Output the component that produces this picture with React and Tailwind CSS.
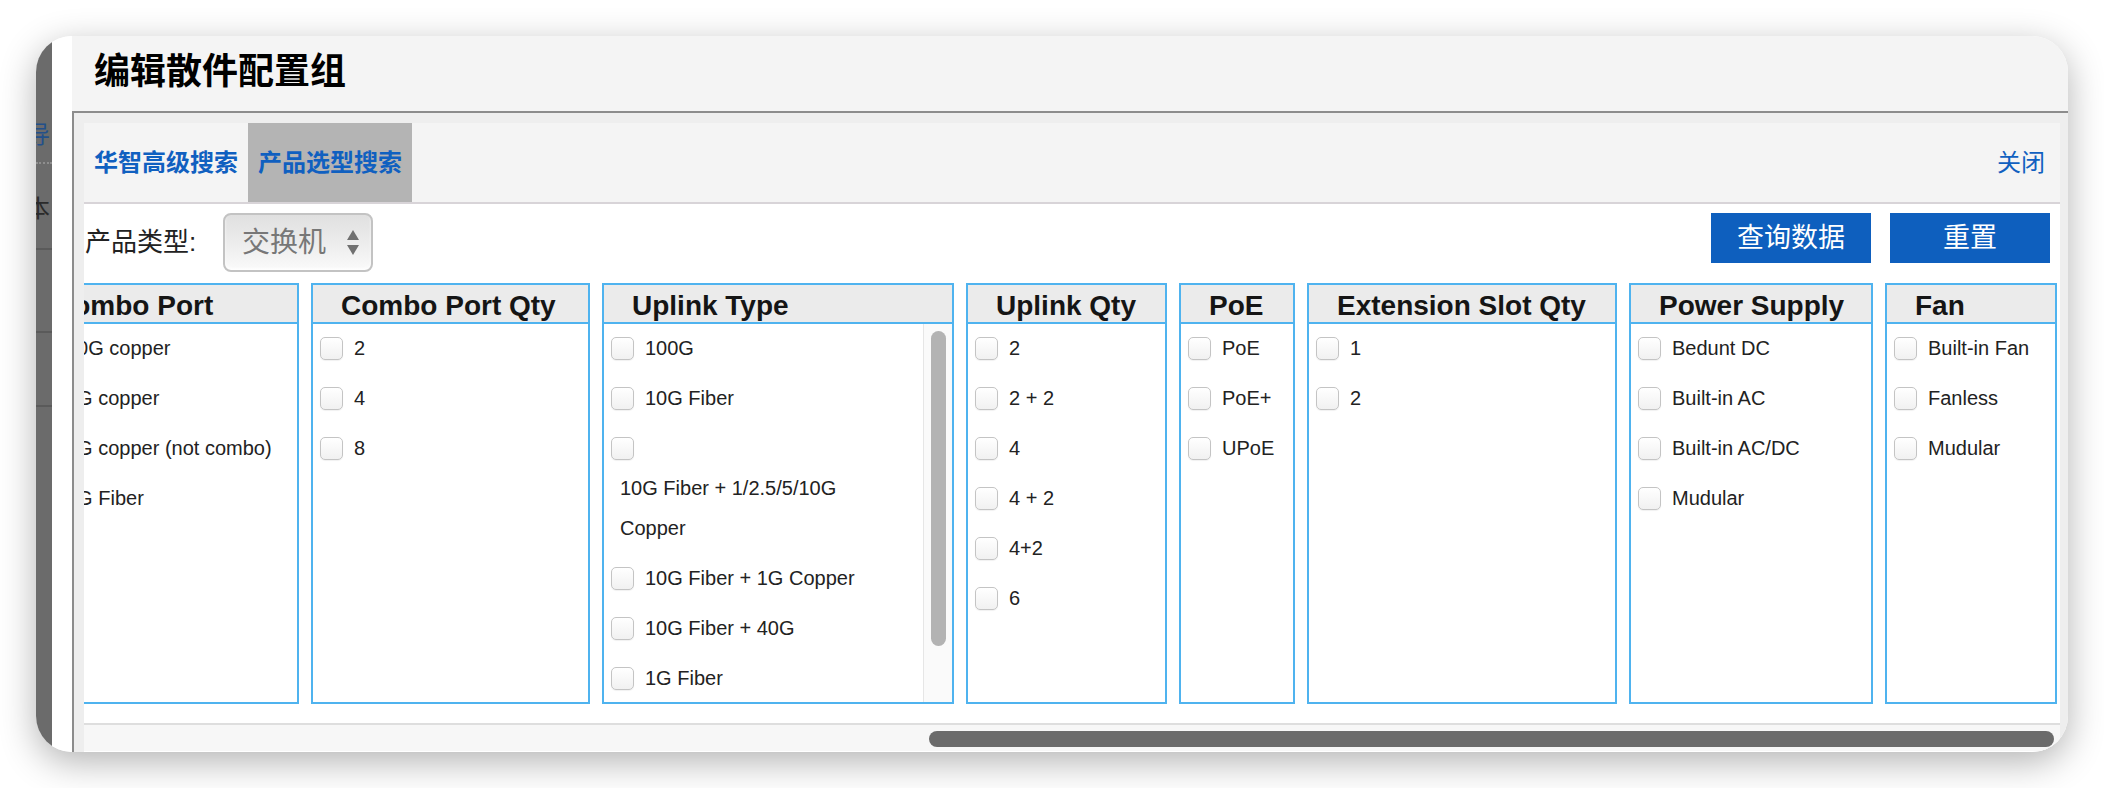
import React from 'react';

const FONT = "font-['Liberation_Sans','Noto_Sans_CJK_SC',sans-serif]";

const columns = [
  { title: 'Combo Port', width: 'w-[276px]', items: ['10G copper', '1G copper', '1G copper (not combo)', '1G Fiber'] },
  { title: 'Combo Port Qty', width: 'w-[279px]', items: ['2', '4', '8'] },
  {
    title: 'Uplink Type',
    width: 'w-[352px]',
    scroll: true,
    items: [
      '100G',
      '10G Fiber',
      { lines: ['10G Fiber + 1/2.5/5/10G', 'Copper'] },
      '10G Fiber + 1G Copper',
      '10G Fiber + 40G',
      '1G Fiber',
      '40G',
    ],
  },
  { title: 'Uplink Qty', width: 'w-[201px]', items: ['2', '2 + 2', '4', '4 + 2', '4+2', '6'] },
  { title: 'PoE', width: 'w-[116px]', items: ['PoE', 'PoE+', 'UPoE'] },
  { title: 'Extension Slot Qty', width: 'w-[310px]', items: ['1', '2'] },
  { title: 'Power Supply', width: 'w-[244px]', items: ['Bedunt DC', 'Built-in AC', 'Built-in AC/DC', 'Mudular'] },
  { title: 'Fan', width: 'w-[172px]', items: ['Built-in Fan', 'Fanless', 'Mudular'] },
];

const Checkbox = () => (
  <span className="block w-[23px] h-[23px] shrink-0 rounded-[5px] border border-[#c4c4c4] bg-linear-to-b from-white to-[#f1f1f1] shadow-[0_1px_1px_rgba(0,0,0,0.06)]"></span>
);

const Item = ({ item }) => {
  if (typeof item === 'object') {
    return (
      <div className="mb-2.5">
        <div className="flex items-center h-10 pl-[7px]">
          <Checkbox />
        </div>
        <div className="pl-[16px] leading-10">
          {item.lines[0]}
          <br />
          {item.lines[1]}
        </div>
      </div>
    );
  }
  return (
    <div className="flex items-center h-10 mb-2.5 pl-[7px] whitespace-nowrap">
      <Checkbox />
      <span className="ml-[11px]">{item}</span>
    </div>
  );
};

const Column = ({ col }) => (
  <div className={`${col.width} h-[421px] shrink-0 flex flex-col border-2 border-[#4fb3ef] bg-white`}>
    <div className="h-[39px] shrink-0 flex items-center pl-[28px] pt-[5px] bg-[#ebebeb] border-b-2 border-[#4fb3ef] text-[28px] font-bold text-[#151515] whitespace-nowrap">
      {col.title}
    </div>
    <div className="flex-1 flex min-h-0">
      <div className="flex-1 overflow-hidden pt-[4px] text-[20px] text-[#222]">
        {col.items.map((item, i) => (
          <Item key={i} item={item} />
        ))}
      </div>
      {col.scroll && (
        <div className="w-[29px] shrink-0 border-l border-[#e6e6e6] bg-[#fafafa] pt-[7px] flex justify-center">
          <div className="w-[15px] h-[315px] rounded-full bg-[#b3b3b3]"></div>
        </div>
      )}
    </div>
  </div>
);

const SideStrip = () => (
  <div className="w-4 shrink-0 bg-[#6b6b6b] overflow-hidden">
    <div className="h-[86px]"></div>
    <div className="h-[26px] leading-[26px] text-[24px] text-[#23508a] -ml-[10px] whitespace-nowrap">导</div>
    <div className="mt-[14px] border-t-2 border-dotted border-[#8e8e8e]"></div>
    <div className="mt-[32px] h-[26px] leading-[26px] text-[24px] text-[#2a2a2a] -ml-[10px] whitespace-nowrap">本</div>
    <div className="mt-[26px] h-[2px] bg-[#5a5a5a]"></div>
    <div className="mt-[81px] h-[2px] bg-[#5a5a5a]"></div>
    <div className="mt-[72px] h-[2px] bg-[#5a5a5a]"></div>
  </div>
);

export default function App() {
  return (
    <div className={`${FONT} w-[2104px] h-[788px] bg-white overflow-hidden pt-[36px] pl-[36px]`}>
      <div className="w-[2032px] h-[716px] rounded-[36px] overflow-hidden flex bg-white shadow-[0_10px_36px_rgba(0,0,0,0.3)]">
        <SideStrip />
        <div className="w-5 shrink-0 bg-white"></div>

        {/* dialog */}
        <div className="flex-1 flex flex-col min-w-0">
          <div className="h-[75px] shrink-0 bg-[#f4f4f4] flex items-center pl-[22px]">
            <h1 className="text-[36px] font-bold text-black -mt-[4px]">编辑散件配置组</h1>
          </div>

          <div className="flex-1 border-t-2 border-l-2 border-[#8c8c8c] bg-[#eeeeee] pt-[10px] pl-[10px] pr-[8px] min-h-0">
            <div className="bg-white h-full flex flex-col">
              {/* tabs */}
              <div className="h-[81px] shrink-0 flex bg-[#f4f4f4] border-b-2 border-[#d8d4d8]">
                <div className="w-[164px] flex items-center justify-center text-[24px] font-bold text-[#1060c0]">
                  华智高级搜索
                </div>
                <div className="w-[164px] flex items-center justify-center bg-[#b4b4b4] text-[24px] font-bold text-[#1060c0]">
                  产品选型搜索
                </div>
                <div className="ml-auto pr-[15px] flex items-center text-[24px] text-[#1060c0]">关闭</div>
              </div>

              {/* toolbar */}
              <div className="flex items-start pt-[9px] pl-px pr-[10px]">
                <div className="flex items-center">
                  <span className="w-[138px] text-[26px] text-[#222]">产品类型:</span>
                  <div className="w-[150px] h-[59px] rounded-[8px] border-2 border-[#c3c3c3] bg-linear-to-b from-[#e0e0e0] via-[#ececec] to-[#fafafa] flex items-center pl-[17px] pr-[12px] shadow-[inset_0_-2px_3px_rgba(255,255,255,0.8)]">
                    <span className="text-[28px] text-[#777]">交换机</span>
                    <svg className="ml-auto" width="12" height="26" viewBox="0 0 12 26">
                      <path d="M6 0 L12 10 L0 10 Z" fill="#707070" />
                      <path d="M0 15 L12 15 L6 25 Z" fill="#707070" />
                    </svg>
                  </div>
                </div>
                <div className="ml-auto flex gap-[19px]">
                  <button className="w-[160px] h-[50px] bg-[#0e5fbe] text-white text-[27px] flex items-center justify-center">
                    查询数据
                  </button>
                  <button className="w-[160px] h-[50px] bg-[#0e5fbe] text-white text-[27px] flex items-center justify-center">
                    重置
                  </button>
                </div>
              </div>

              {/* columns */}
              <div className="mt-[11px] overflow-hidden shrink-0">
                <div className="flex gap-3 -ml-[61px]">
                  {columns.map((col) => (
                    <Column key={col.title} col={col} />
                  ))}
                </div>
              </div>

              {/* horizontal scrollbar */}
              <div className="mt-[19px] border-t-2 border-[#dedede] bg-[#f7f7f7] h-[28px] pt-[6px] pl-[845px]">
                <div className="w-[1125px] h-4 rounded-full bg-[#6b6b6b]"></div>
              </div>
            </div>
          </div>
        </div>
      </div>
    </div>
  );
}
